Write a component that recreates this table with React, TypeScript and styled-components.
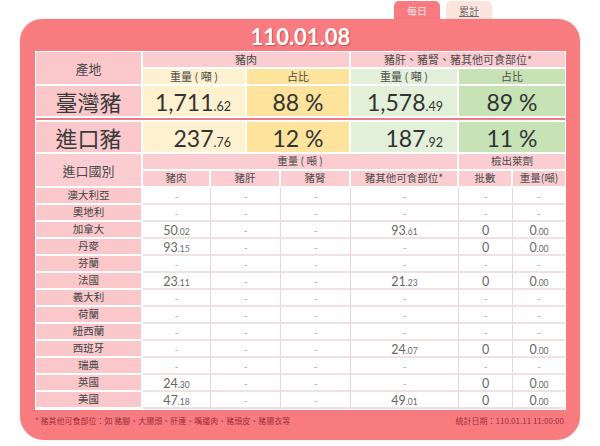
import React from "react";
import styled, { createGlobalStyle } from "styled-components";

const GlobalStyle = createGlobalStyle`
  html, body { margin: 0; padding: 0; background: #ffffff; }
  body { font-family: "Noto Sans CJK TC", "Noto Sans", sans-serif; }
  * { box-sizing: border-box; }
`;

const C = {
  panel: "#f87b80",
  pink: "#fac8cb",
  pinkHead: "#fbcdd0",
  yellowLight: "#fdf1cf",
  yellow: "#fde39b",
  greenLight: "#e2f0da",
  green: "#c7e3b6",
  divider: "#ef7c82",
  lineH: "#f1e1e3",
  lineV: "#eed2d6",
};

const Page = styled.div`
  width: 600px;
  height: 446px;
  display: flex;
  flex-direction: column;
  padding-left: 20px;
`;

const Tabs = styled.div`
  display: flex;
  gap: 6px;
  padding-left: 374px;
  margin-top: 1px;
  height: 18px;
`;

const Tab = styled.div<{ $active?: boolean }>`
  width: 46px;
  height: 18px;
  border-radius: 5px 5px 0 0;
  background: ${(p) => (p.$active ? C.panel : "#fbe4dc")};
  color: ${(p) => (p.$active ? "#fde0e1" : "#6a6a6a")};
  text-decoration: ${(p) => (p.$active ? "none" : "underline")};
  font-size: 10px;
  display: flex;
  align-items: center;
  justify-content: center;
`;

const Panel = styled.div`
  width: 560px;
  height: 421px;
  background: ${C.panel};
  border-radius: 22px 22px 24px 24px;
  padding: 0 14px 0 15px;
  display: flex;
  flex-direction: column;
  box-shadow: 0 0 2px rgba(200, 80, 90, 0.25);
`;

const Title = styled.div`
  height: 32px;
  display: flex;
  align-items: center;
  justify-content: center;
  padding-top: 2px;
  font-family: Lato, "Open Sans", sans-serif;
  font-weight: 700;
  font-size: 22px;
  color: #ffffff;
  text-shadow: 1px 1px 1px rgba(120, 30, 40, 0.45);
`;

const Table = styled.div`
  background: #ffffff;
  padding: 1px;
  display: flex;
  flex-direction: column;
  gap: 2px;
`;

const TopGrid = styled.div`
  display: grid;
  grid-template-columns: 105px 102px 102px 106px 106px;
  grid-template-rows: 15px 15px 30px 2px 30px;
  gap: 2px;
`;

const Cell = styled.div<{ $bg: string; $col?: string; $row?: string; $size?: number }>`
  background: ${(p) => p.$bg};
  grid-column: ${(p) => p.$col || "auto"};
  grid-row: ${(p) => p.$row || "auto"};
  display: flex;
  align-items: center;
  justify-content: center;
  color: #4a4a4a;
  font-size: ${(p) => p.$size || 11}px;
  line-height: 1;
  white-space: nowrap;
`;

const Divider = styled.div`
  grid-column: 1 / -1;
  background: ${C.divider};
`;

const BigName = styled(Cell)`
  font-size: 22px;
  color: #3a3a3a;
`;

const BigNum = styled(Cell)<{ $right?: boolean }>`
  justify-content: ${(p) => (p.$right ? "flex-end" : "center")};
  padding-right: ${(p) => (p.$right ? "14px" : "0")};
  padding-top: 2px;
  font-family: Lato, "Open Sans", sans-serif;
  font-size: 23px;
  color: #333333;
  align-items: baseline;
  line-height: 28px;
`;

const BigDec = styled.span`
  font-size: 12.5px;
`;

const BottomGrid = styled.div`
  display: grid;
  grid-template-columns: 107px 68px 70px 70px 108px 54px 52px;
  grid-template-rows: 17px 17px;
  grid-auto-rows: 17px;
`;

const HeadCell = styled.div<{ $col?: string; $row?: string; $last?: boolean; $size?: number }>`
  background: ${C.pinkHead};
  grid-column: ${(p) => p.$col || "auto"};
  grid-row: ${(p) => p.$row || "auto"};
  border-right: ${(p) => (p.$last ? "0" : "2px solid #ffffff")};
  border-bottom: 2px solid #ffffff;
  display: flex;
  align-items: center;
  justify-content: center;
  color: #4a4a4a;
  font-size: ${(p) => p.$size || 10.5}px;
  line-height: 1;
  white-space: nowrap;
`;

const RowHead = styled.div`
  background: ${C.pink};
  border-right: 2px solid #ffffff;
  border-bottom: 2px solid #ffffff;
  display: flex;
  align-items: center;
  justify-content: center;
  color: #444444;
  font-size: 10.5px;
  line-height: 1;
`;

const DataCell = styled.div<{ $last?: boolean; $dash?: boolean }>`
  background: #ffffff;
  border-right: ${(p) => (p.$last ? "0" : `1px solid ${C.lineV}`)};
  border-bottom: 2px solid ${C.lineH};
  display: flex;
  align-items: baseline;
  justify-content: center;
  padding-top: 1px;
  font-family: Lato, "Open Sans", sans-serif;
  font-size: ${(p) => (p.$dash ? "10px" : "12.5px")};
  color: ${(p) => (p.$dash ? "#a0a0a0" : "#666666")};
  line-height: 15px;
`;

const Dec = styled.span`
  font-size: 8.5px;
`;

const Footer = styled.div`
  height: 30px;
  padding-top: 4px;
  display: flex;
  justify-content: space-between;
  align-items: flex-start;
  font-size: 8px;
  line-height: 14px;
  color: #9e2f3c;
`;

const FootRight = styled.span`
  padding-right: 2px;
`;

const NumText: React.FC<{ v: string; big?: boolean }> = ({ v, big }) => {
  const [i, d] = v.split(".");
  const D = big ? BigDec : Dec;
  return (
    <>
      {i}
      {d !== undefined && <D>.{d}</D>}
    </>
  );
};

const rows: [string, string[]][] = [
  ["澳大利亞", ["-", "-", "-", "-", "-", "-"]],
  ["奧地利", ["-", "-", "-", "-", "-", "-"]],
  ["加拿大", ["50.02", "-", "-", "93.61", "0", "0.00"]],
  ["丹麥", ["93.15", "-", "-", "-", "0", "0.00"]],
  ["芬蘭", ["-", "-", "-", "-", "-", "-"]],
  ["法國", ["23.11", "-", "-", "21.23", "0", "0.00"]],
  ["義大利", ["-", "-", "-", "-", "-", "-"]],
  ["荷蘭", ["-", "-", "-", "-", "-", "-"]],
  ["紐西蘭", ["-", "-", "-", "-", "-", "-"]],
  ["西班牙", ["-", "-", "-", "24.07", "0", "0.00"]],
  ["瑞典", ["-", "-", "-", "-", "-", "-"]],
  ["英國", ["24.30", "-", "-", "-", "0", "0.00"]],
  ["美國", ["47.18", "-", "-", "49.01", "0", "0.00"]],
];

export default function App() {
  return (
    <>
      <GlobalStyle />
      <Page>
        <Tabs>
          <Tab $active>每日</Tab>
          <Tab>累計</Tab>
        </Tabs>
        <Panel>
          <Title>110.01.08</Title>
          <Table>
            <TopGrid>
              <Cell $bg={C.pink} $row="1 / 3" $size={13}>
                產地
              </Cell>
              <Cell $bg={C.pinkHead} $col="2 / 4">豬肉</Cell>
              <Cell $bg={C.pinkHead} $col="4 / 6">豬肝、豬腎、豬其他可食部位*</Cell>
              <Cell $bg={C.yellowLight}>重量 ( 噸 )</Cell>
              <Cell $bg={C.yellow}>占比</Cell>
              <Cell $bg={C.greenLight}>重量 ( 噸 )</Cell>
              <Cell $bg={C.green}>占比</Cell>

              <BigName $bg={C.pink}>臺灣豬</BigName>
              <BigNum $bg={C.yellowLight} $right>
                <NumText v="1,711.62" big />
              </BigNum>
              <BigNum $bg={C.yellow}>88 %</BigNum>
              <BigNum $bg={C.greenLight} $right>
                <NumText v="1,578.49" big />
              </BigNum>
              <BigNum $bg={C.green}>89 %</BigNum>

              <Divider />

              <BigName $bg={C.pink}>進口豬</BigName>
              <BigNum $bg={C.yellowLight} $right>
                <NumText v="237.76" big />
              </BigNum>
              <BigNum $bg={C.yellow}>12 %</BigNum>
              <BigNum $bg={C.greenLight} $right>
                <NumText v="187.92" big />
              </BigNum>
              <BigNum $bg={C.green}>11 %</BigNum>
            </TopGrid>

            <BottomGrid>
              <HeadCell $row="1 / 3" $size={13}>
                進口國別
              </HeadCell>
              <HeadCell $col="2 / 6">重量 ( 噸 )</HeadCell>
              <HeadCell $col="6 / 8" $last>
                檢出萊劑
              </HeadCell>
              <HeadCell>豬肉</HeadCell>
              <HeadCell>豬肝</HeadCell>
              <HeadCell>豬腎</HeadCell>
              <HeadCell>豬其他可食部位*</HeadCell>
              <HeadCell>批數</HeadCell>
              <HeadCell $last>重量(噸)</HeadCell>

              {rows.map(([name, vals]) => (
                <React.Fragment key={name}>
                  <RowHead>{name}</RowHead>
                  {vals.map((v, i) => (
                    <DataCell key={i} $last={i === vals.length - 1} $dash={v === "-"}>
                      <NumText v={v} />
                    </DataCell>
                  ))}
                </React.Fragment>
              ))}
            </BottomGrid>
          </Table>
          <Footer>
            <span>* 豬其他可食部位：如 豬腳、大腸頭、肝連、嘴邊肉、豬頭皮、豬腸衣等</span>
            <FootRight>統計日期：110.01.11 11:00:00</FootRight>
          </Footer>
        </Panel>
      </Page>
    </>
  );
}
